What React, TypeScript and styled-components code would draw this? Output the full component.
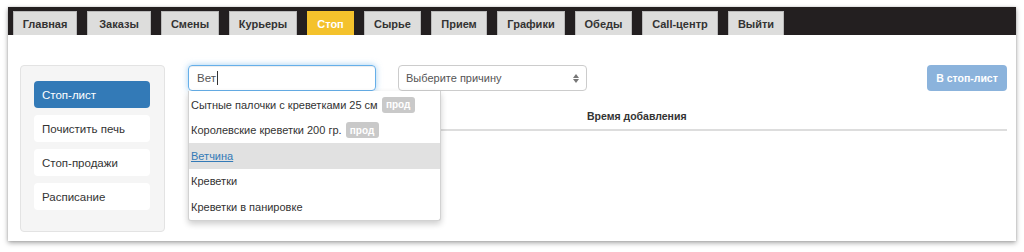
import React, { FC } from "react";
import styled, { createGlobalStyle } from "styled-components";

const GlobalStyle = createGlobalStyle`
  html, body {
    margin: 0;
    padding: 0;
    background: #ffffff;
    font-family: "Liberation Sans", Arial, Helvetica, sans-serif;
    color: #333333;
  }
`;

const Page = styled.div`
  width: 1024px;
  height: 252px;
  box-sizing: border-box;
  padding: 7px 8px 11px 8px;
  overflow: hidden;
`;

const Frame = styled.div`
  height: 100%;
  display: flex;
  flex-direction: column;
  background: #ffffff;
  box-shadow: 0 2px 5px rgba(0, 0, 0, 0.35), 0 0 2px rgba(0, 0, 0, 0.15);
`;

const TopBar = styled.div`
  height: 28px;
  flex: none;
  box-sizing: border-box;
  background: #231f20;
  padding: 4px 0 0 5px;
  display: flex;
  gap: 10px;
  align-items: flex-end;
`;

const Tab = styled.div<{ $active?: boolean; $w: number }>`
  width: ${(p) => p.$w}px;
  height: 24px;
  box-sizing: border-box;
  display: flex;
  align-items: center;
  justify-content: center;
  font-size: 11px;
  font-weight: bold;
  background: ${(p) => (p.$active ? "#f4c22c" : "#dddddc")};
  color: ${(p) => (p.$active ? "#ffffff" : "#333333")};
  border: 1px solid ${(p) => (p.$active ? "#f4c22c" : "#b9b9b9")};
  border-bottom: none;
`;

const Content = styled.div`
  flex: 1;
  display: flex;
  padding: 30px 9px 9px 12px;
  gap: 23px;
`;

const SidePanel = styled.div`
  width: 145px;
  box-sizing: border-box;
  background: #f5f5f5;
  border: 1px solid #e3e3e3;
  border-radius: 4px;
  padding: 15px 14px 0 13px;
  display: flex;
  flex-direction: column;
  gap: 7px;
`;

const SideItem = styled.div<{ $active?: boolean }>`
  height: 27px;
  box-sizing: border-box;
  padding: 0 8px;
  display: flex;
  align-items: center;
  font-size: 11.5px;
  border-radius: 4px;
  background: ${(p) => (p.$active ? "#337ab7" : "#ffffff")};
  color: ${(p) => (p.$active ? "#ffffff" : "#333333")};
`;

const Main = styled.div`
  flex: 1;
  display: flex;
  flex-direction: column;
  position: relative;
`;

const Toolbar = styled.div`
  display: flex;
  align-items: center;
  gap: 22px;
  height: 26px;
`;

const SearchBox = styled.div`
  width: 188px;
  height: 26px;
  box-sizing: border-box;
  border: 1px solid #66afe9;
  border-radius: 4px;
  box-shadow: inset 0 1px 1px rgba(0, 0, 0, 0.075), 0 0 6px rgba(102, 175, 233, 0.6);
  display: flex;
  align-items: center;
  padding: 0 8px;
  font-size: 11.5px;
  color: #555555;
`;

const Caret = styled.span`
  display: inline-block;
  width: 1px;
  height: 14px;
  background: #333333;
  margin-left: 1px;
`;

const Select = styled.div`
  width: 189px;
  height: 26px;
  box-sizing: border-box;
  border: 1px solid #cccccc;
  border-radius: 4px;
  display: flex;
  align-items: center;
  justify-content: space-between;
  padding: 0 7px 0 7px;
  font-size: 11px;
  color: #555555;
`;

const Arrows = styled.span`
  display: flex;
  flex-direction: column;
  gap: 1px;
`;

const Spacer = styled.div`
  flex: 1;
`;

const AddButton = styled.div`
  width: 80px;
  height: 26px;
  border-radius: 4px;
  background: #8bb3dc;
  color: #ffffff;
  font-size: 10.5px;
  font-weight: bold;
  display: flex;
  align-items: center;
  justify-content: center;
`;

const TableHead = styled.div`
  margin-top: 18px;
  display: grid;
  grid-template-columns: 399px auto 1fr;
  border-bottom: 2px solid #dddddd;
  padding-bottom: 6px;
`;

const HeadCell = styled.div`
  font-size: 10.5px;
  font-weight: bold;
  line-height: 14px;
  color: #333333;
`;

const Dropdown = styled.div`
  position: absolute;
  top: 26px;
  left: 0;
  width: 253px;
  box-sizing: border-box;
  background: #ffffff;
  border: 1px solid #d2d2d2;
  border-top: none;
  border-radius: 0 0 3px 3px;
  box-shadow: 0 3px 6px rgba(0, 0, 0, 0.2);
  padding-top: 1px;
`;

const Option = styled.div<{ $hover?: boolean }>`
  height: 25.5px;
  display: flex;
  align-items: center;
  padding: 0 2px;
  font-size: 11px;
  white-space: nowrap;
  background: ${(p) => (p.$hover ? "#e1e1e1" : "transparent")};
  color: ${(p) => (p.$hover ? "#337ab7" : "#333333")};
  text-decoration: ${(p) => (p.$hover ? "underline" : "none")};
`;

const Badge = styled.span`
  margin-left: 4px;
  height: 16px;
  width: 33px;
  border-radius: 3px;
  background: #c9c9c9;
  color: #ffffff;
  font-size: 10px;
  font-weight: bold;
  display: inline-flex;
  align-items: center;
  justify-content: center;
`;

const tabs = [
  { name: "Главная", w: 64 },
  { name: "Заказы", w: 64 },
  { name: "Смены", w: 58 },
  { name: "Курьеры", w: 68 },
  { name: "Стоп", w: 47 },
  { name: "Сырье", w: 57 },
  { name: "Прием", w: 56 },
  { name: "Графики", w: 68 },
  { name: "Обеды", w: 57 },
  { name: "Call-центр", w: 76 },
  { name: "Выйти", w: 56 },
];

const sideItems = ["Стоп-лист", "Почистить печь", "Стоп-продажи", "Расписание"];

const options = [
  { name: "Сытные палочки с креветками 25 см", badge: true },
  { name: "Королевские креветки 200 гр.", badge: true },
  { name: "Ветчина", hover: true },
  { name: "Креветки" },
  { name: "Креветки в панировке" },
];

const App: FC = () => {
  return (
    <Page>
      <GlobalStyle />
      <Frame>
        <TopBar>
          {tabs.map((t) => (
            <Tab key={t.name} $w={t.w} $active={t.name === "Стоп"}>
              {t.name}
            </Tab>
          ))}
        </TopBar>
        <Content>
          <SidePanel>
            {sideItems.map((s, i) => (
              <SideItem key={s} $active={i === 0}>
                {s}
              </SideItem>
            ))}
          </SidePanel>
          <Main>
            <Toolbar>
              <SearchBox>
                Вет
                <Caret />
              </SearchBox>
              <Select>
                Выберите причину
                <Arrows>
                  <svg width="6" height="4" viewBox="0 0 6 4">
                    <path d="M0 4 L3 0 L6 4 Z" fill="#777" />
                  </svg>
                  <svg width="6" height="4" viewBox="0 0 6 4">
                    <path d="M0 0 L3 4 L6 0 Z" fill="#777" />
                  </svg>
                </Arrows>
              </Select>
              <Spacer />
              <AddButton>В стоп-лист</AddButton>
            </Toolbar>
            <TableHead>
              <div />
              <HeadCell>Время добавления</HeadCell>
              <div />
            </TableHead>
            <Dropdown>
              {options.map((o) => (
                <Option key={o.name} $hover={o.hover}>
                  {o.name}
                  {o.badge && <Badge>прод</Badge>}
                </Option>
              ))}
            </Dropdown>
          </Main>
        </Content>
      </Frame>
    </Page>
  );
};

export default App;
